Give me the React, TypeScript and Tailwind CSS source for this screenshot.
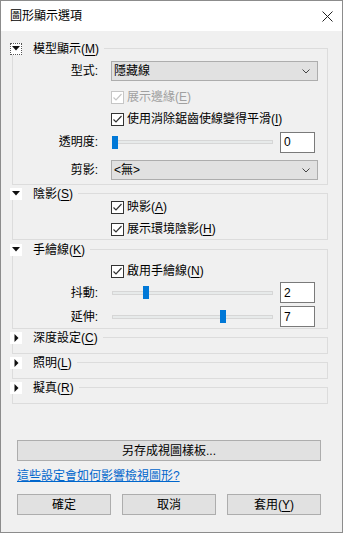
import type { ReactNode } from 'react';

const FONT = { fontFamily: '"Liberation Sans", "Noto Sans CJK TC", sans-serif' };

function Mn({ children }: { children: ReactNode }) {
  return <span className="underline underline-offset-2">{children}</span>;
}

function Chevron() {
  return (
    <svg width="8" height="5" viewBox="0 0 8 5" className="shrink-0">
      <path d="M0.5 0.5 L4 4 L7.5 0.5" fill="none" stroke="#444" strokeWidth="1" />
    </svg>
  );
}

function Dropdown({ value }: { value: string }) {
  return (
    <div className="w-[207px] h-[20px] bg-[#e1e1e1] border border-[#adadad] flex items-center justify-between pl-[2px] pr-[7px]">
      <span className="text-[12px] leading-none">{value}</span>
      <Chevron />
    </div>
  );
}

function Checkbox({ label, disabled }: { label: ReactNode; disabled?: boolean }) {
  return (
    <div className="flex items-center gap-[3px]">
      <div
        className={`w-[13px] h-[13px] border flex items-center justify-center bg-white ${
          disabled ? 'border-[#c6c6c6]' : 'border-[#333333]'
        }`}
      >
        <svg width="11" height="11" viewBox="0 0 11 11">
          <path
            d="M1.5 5.5 L4 8 L9.5 2"
            fill="none"
            stroke={disabled ? '#c6c6c6' : '#333333'}
            strokeWidth="1.2"
          />
        </svg>
      </div>
      <span className={`text-[12px] leading-none ${disabled ? 'text-[#a0a0a0]' : 'text-black'}`}>
        {label}
      </span>
    </div>
  );
}

function Slider({ pos }: { pos: number }) {
  return (
    <div className="relative w-[161px] h-[13px] flex items-center">
      <div className="w-full h-[4px] bg-[#e7eaea] border border-[#d6d6d6]" />
      <div className="absolute top-0 w-[6px] h-[13px] bg-[#0078d7]" style={{ left: pos }} />
    </div>
  );
}

function NumBox({ value }: { value: string }) {
  return (
    <div className="w-[35px] h-[21px] bg-white border border-[#7a7a7a] flex items-center pl-[3px] text-[12px]">
      {value}
    </div>
  );
}

function Label({ children }: { children: ReactNode }) {
  return <div className="w-[85px] text-right text-[12px] leading-none mr-[13px]">{children}</div>;
}

function Group({
  title,
  open,
  focus,
  className,
  children,
}: {
  title: ReactNode;
  open?: boolean;
  focus?: boolean;
  className?: string;
  children?: ReactNode;
}) {
  return (
    <div className={`relative border border-[#dcdcdc] ${className ?? ''}`}>
      <div className="absolute -top-[7px] -left-[3px] flex items-center bg-[#f0f0f0] pr-[5px] h-[13px]">
        <div
          className={`w-[12px] h-[12px] bg-white flex items-center justify-center ${
            focus ? 'border border-dotted border-[#555]' : ''
          }`}
        >
          {open ? (
            <svg width="8" height="5" viewBox="0 0 8 5">
              <path d="M0 0 H8 L4 4.5 Z" fill="#111" />
            </svg>
          ) : (
            <svg width="5" height="8" viewBox="0 0 5 8">
              <path d="M0.5 0 V8 L4.5 4 Z" fill="#111" />
            </svg>
          )}
        </div>
        <span className="ml-[11px] text-[12px] leading-none">{title}</span>
      </div>
      {children}
    </div>
  );
}

export default function App() {
  return (
    <div
      className="w-[343px] h-[533px] border border-[#8c8c8c] bg-[#f0f0f0] flex flex-col text-black"
      style={FONT}
    >
      <div className="h-[30px] bg-white flex items-center justify-between pl-[9px] pr-[9px] shrink-0">
        <span className="text-[12px]">圖形顯示選項</span>
        <svg width="11" height="11" viewBox="0 0 11 11">
          <path d="M0.5 0.5 L10.5 10.5 M10.5 0.5 L0.5 10.5" stroke="#222" strokeWidth="1" />
        </svg>
      </div>

      <div className="pl-[11px] pr-[14px] pt-[17px] flex flex-col gap-[8px]">
        <Group
          open
          focus
          title={
            <>
              模型顯示(<Mn>M</Mn>)
            </>
          }
          className="h-[137px]"
        >
          <div className="flex flex-col pt-[11px]">
            <div className="h-[22px] flex items-center">
              <Label>型式:</Label>
              <Dropdown value="隱藏線" />
            </div>
            <div className="h-[22px] mt-[4px] flex items-center pl-[98px]">
              <Checkbox
                disabled
                label={
                  <>
                    展示邊緣(<Mn>E</Mn>)
                  </>
                }
              />
            </div>
            <div className="h-[22px] flex items-center pl-[98px]">
              <Checkbox
                label={
                  <>
                    使用消除鋸齒使線變得平滑(<Mn>I</Mn>)
                  </>
                }
              />
            </div>
            <div className="h-[22px] mt-[1px] flex items-center">
              <Label>透明度:</Label>
              <div className="ml-[1px]">
                <Slider pos={0} />
              </div>
              <div className="ml-[7px]">
                <NumBox value="0" />
              </div>
            </div>
            <div className="h-[22px] mt-[6px] flex items-center">
              <Label>剪影:</Label>
              <Dropdown value="<無>" />
            </div>
          </div>
        </Group>

        <Group
          open
          title={
            <>
              陰影(<Mn>S</Mn>)
            </>
          }
          className="h-[47px]"
        >
          <div className="flex flex-col pt-[4px] gap-[4px]">
            <div className="h-[18px] flex items-center pl-[98px]">
              <Checkbox
                label={
                  <>
                    映影(<Mn>A</Mn>)
                  </>
                }
              />
            </div>
            <div className="h-[18px] flex items-center pl-[98px]">
              <Checkbox
                label={
                  <>
                    展示環境陰影(<Mn>H</Mn>)
                  </>
                }
              />
            </div>
          </div>
        </Group>

        <Group
          open
          title={
            <>
              手繪線(<Mn>K</Mn>)
            </>
          }
          className="h-[80px] mt-[1px]"
        >
          <div className="flex flex-col pt-[12px]">
            <div className="h-[18px] flex items-center pl-[98px]">
              <Checkbox
                label={
                  <>
                    啟用手繪線(<Mn>N</Mn>)
                  </>
                }
              />
            </div>
            <div className="h-[21px] mt-[2px] flex items-center">
              <Label>抖動:</Label>
              <div className="ml-[1px]">
                <Slider pos={31} />
              </div>
              <div className="ml-[7px]">
                <NumBox value="2" />
              </div>
            </div>
            <div className="h-[21px] mt-[3px] flex items-center">
              <Label>延伸:</Label>
              <div className="ml-[1px]">
                <Slider pos={108} />
              </div>
              <div className="ml-[7px]">
                <NumBox value="7" />
              </div>
            </div>
          </div>
        </Group>

        <Group
          title={
            <>
              深度設定(<Mn>C</Mn>)
            </>
          }
          className="h-[17px]"
        />
        <Group
          title={
            <>
              照明(<Mn>L</Mn>)
            </>
          }
          className="h-[17px]"
        />
        <Group
          title={
            <>
              擬真(<Mn>R</Mn>)
            </>
          }
          className="h-[17px]"
        />
      </div>

      <div className="pl-[16px] pr-[21px] mt-[36px] flex flex-col">
        <button className="h-[21px] w-full bg-[#e1e1e1] border border-[#adadad] text-[12px] leading-none">
          另存成視圖樣板...
        </button>
        <a className="mt-[7px] text-[12px] text-[#0066cc] underline leading-[16px] self-start">
          這些設定會如何影響檢視圖形?
        </a>
        <div className="mt-[10px] flex justify-between">
          <button className="w-[94px] h-[21px] bg-[#e1e1e1] border border-[#adadad] text-[12px] leading-none">
            確定
          </button>
          <button className="w-[94px] h-[21px] bg-[#e1e1e1] border border-[#adadad] text-[12px] leading-none">
            取消
          </button>
          <button className="w-[94px] h-[21px] bg-[#e1e1e1] border border-[#adadad] text-[12px] leading-none">
            套用(<Mn>Y</Mn>)
          </button>
        </div>
      </div>
    </div>
  );
}
